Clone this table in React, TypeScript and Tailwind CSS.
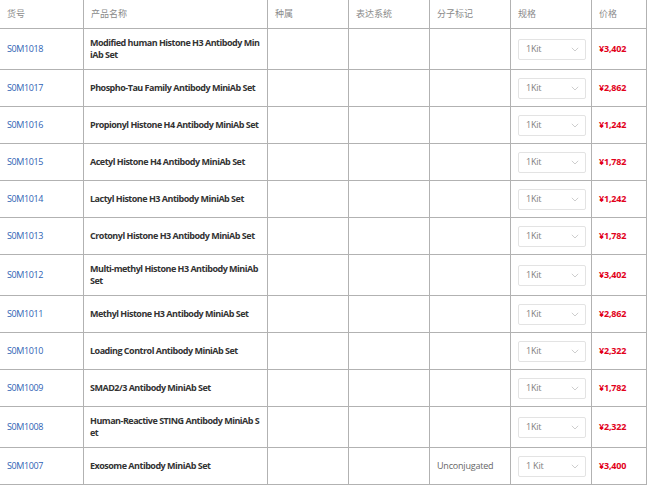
import React from "react";

type Row = {
  id: string;
  name: string[];
  tag?: string;
  spec: string;
  price: string;
};

const rows: Row[] = [
  { id: "S0M1018", name: ["Modified human Histone H3 Antibody Min", "iAb Set"], spec: "1Kit", price: "¥3,402" },
  { id: "S0M1017", name: ["Phospho-Tau Family Antibody MiniAb Set"], spec: "1Kit", price: "¥2,862" },
  { id: "S0M1016", name: ["Propionyl Histone H4 Antibody MiniAb Set"], spec: "1Kit", price: "¥1,242" },
  { id: "S0M1015", name: ["Acetyl Histone H4 Antibody MiniAb Set"], spec: "1Kit", price: "¥1,782" },
  { id: "S0M1014", name: ["Lactyl Histone H3 Antibody MiniAb Set"], spec: "1Kit", price: "¥1,242" },
  { id: "S0M1013", name: ["Crotonyl Histone H3 Antibody MiniAb Set"], spec: "1Kit", price: "¥1,782" },
  { id: "S0M1012", name: ["Multi-methyl Histone H3 Antibody MiniAb", "Set"], spec: "1Kit", price: "¥3,402" },
  { id: "S0M1011", name: ["Methyl Histone H3 Antibody MiniAb Set"], spec: "1Kit", price: "¥2,862" },
  { id: "S0M1010", name: ["Loading Control Antibody MiniAb Set"], spec: "1Kit", price: "¥2,322" },
  { id: "S0M1009", name: ["SMAD2/3 Antibody MiniAb Set"], spec: "1Kit", price: "¥1,782" },
  { id: "S0M1008", name: ["Human-Reactive STING Antibody MiniAb S", "et"], spec: "1Kit", price: "¥2,322" },
  { id: "S0M1007", name: ["Exosome Antibody MiniAb Set"], tag: "Unconjugated", spec: "1 Kit", price: "¥3,400" },
];

const headers = ["货号", "产品名称", "种属", "表达系统", "分子标记", "规格", "价格"];

function Chevron() {
  return (
    <svg width="8" height="5" viewBox="0 0 8 5" fill="none">
      <path d="M0.8 0.8 L4 4 L7.2 0.8" stroke="#c8c8c8" strokeWidth="0.9" />
    </svg>
  );
}

export default function App() {
  const font = "font-['Open_Sans','Noto_Sans_CJK_SC',sans-serif]";
  const cell = "border border-[#b2b2b2] px-[7px] align-middle";
  return (
    <div className={`w-[650px] h-[488px] overflow-hidden bg-white ${font}`}>
      <table className="table-fixed border-collapse w-[647px] -ml-px -mt-px">
        <colgroup>
          <col className="w-[84px]" />
          <col className="w-[184px]" />
          <col className="w-[81px]" />
          <col className="w-[81px]" />
          <col className="w-[81px]" />
          <col className="w-[81px]" />
          <col className="w-[55px]" />
        </colgroup>
        <thead>
          <tr className="h-[29px]">
            {headers.map((h) => (
              <th
                key={h}
                className={`${cell} px-[6px] text-left font-normal text-[9px] leading-[12px] text-[#8a8a8a]`}
              >
                {h}
              </th>
            ))}
          </tr>
        </thead>
        <tbody>
          {rows.map((r) => (
            <tr key={r.id} className={r.name.length > 1 ? "h-[41px]" : "h-[37px]"}>
              <td className={`${cell} text-[9px] leading-[12px] tracking-[-0.4px] text-[#2f62b4]`}>{r.id}</td>
              <td className={`${cell} pl-[6px] text-[9px] leading-[12px] tracking-[-0.5px] font-bold text-[#333]`}>
                {r.name.map((l, i) => (
                  <div key={i} className="whitespace-nowrap">
                    {l}
                  </div>
                ))}
              </td>
              <td className={cell}></td>
              <td className={cell}></td>
              <td className={`${cell} px-[5px] text-[9px] leading-[12px] tracking-[-0.2px] text-[#666]`}>{r.tag ?? ""}</td>
              <td className={`${cell} px-[6px]`}>
                <div className="flex h-[21px] w-[68px] items-center justify-between rounded-[2px] border border-[#e3e3e3] bg-white pl-[7px] pr-[6px]">
                  <span className="text-[9px] leading-[12px] tracking-[-0.2px] text-[#808080]">{r.spec}</span>
                  <Chevron />
                </div>
              </td>
              <td className={`${cell} text-[9px] leading-[12px] tracking-[-0.2px] font-bold text-[#e2001a]`}>{r.price}</td>
            </tr>
          ))}
        </tbody>
      </table>
    </div>
  );
}
